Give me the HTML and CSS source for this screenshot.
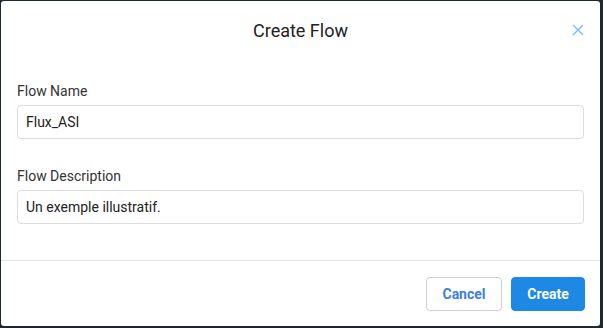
FILE: index.html
```html
<!DOCTYPE html>
<html>
<head>
<meta charset="utf-8">
<link rel="stylesheet" href="styles.css">
</head>
<body>
<div class="modal">
  <div class="modal-header">
    <h1 class="title">Create Flow</h1>
    <button class="close" aria-label="Close">
      <svg width="12" height="12" viewBox="0 0 12 12"><path d="M1 1L11 11M11 1L1 11" stroke="#74b9f5" stroke-width="1.2" fill="none"/></svg>
    </button>
  </div>
  <div class="modal-body">
    <div class="field">
      <label class="label">Flow Name</label>
      <div class="input">Flux_ASI</div>
    </div>
    <div class="field">
      <label class="label">Flow Description</label>
      <div class="input">Un exemple illustratif.</div>
    </div>
  </div>
  <div class="modal-footer">
    <button class="btn btn-cancel">Cancel</button>
    <button class="btn btn-create">Create</button>
  </div>
</div>
</body>
</html>
```
FILE: styles.css
```css
html, body { margin: 0; padding: 0; }
body {
  background: #1e2830;
  width: 603px;
  height: 328px;
  overflow: hidden;
  font-family: Roboto, "Liberation Sans", sans-serif;
}
.modal {
  background: #fff;
  margin: 1px 3px 2px 1px;
  width: 599px;
  height: 325px;
  border-radius: 3px;
  display: flex;
  flex-direction: column;
  box-sizing: border-box;
}
.modal-header {
  height: 58px;
  display: flex;
  align-items: center;
  justify-content: center;
  position: relative;
}
.title {
  margin: 0;
  font-size: 18px;
  font-weight: 400;
  color: #222;
  line-height: 22px;
  padding-top: 1px;
}
.close {
  position: absolute;
  right: 16px;
  top: 23px;
  border: 0;
  background: none;
  padding: 0;
  width: 12px;
  height: 12px;
  display: flex;
}
.modal-body {
  padding: 22px 16px 0 16px;
  flex: 1;
  display: flex;
  flex-direction: column;
  gap: 27px;
}
.field { display: flex; flex-direction: column; gap: 4px; }
.label {
  font-size: 14px;
  line-height: 20px;
  color: #333;
}
.input {
  height: 34px;
  box-sizing: border-box;
  border: 1px solid #dcdcdc;
  border-radius: 4px;
  padding: 0 8px;
  font-size: 14px;
  line-height: 32px;
  color: #222;
}
.modal-footer {
  border-top: 1px solid #e3e3e3;
  height: 66px;
  box-sizing: border-box;
  padding: 16px 15px 0 0;
  display: flex;
  justify-content: flex-end;
  align-items: flex-start;
  gap: 9px;
}
.btn {
  height: 34px;
  border-radius: 4px;
  font-family: Roboto, "Liberation Sans", sans-serif;
  font-size: 14px;
  font-weight: 700;
  padding: 0;
  box-sizing: border-box;
}
.btn-cancel {
  width: 76px;
  background: #fff;
  border: 1px solid #cfcfcf;
  color: #3c7fe0;
}
.btn-create {
  width: 74px;
  background: #1e88e5;
  border: 1px solid #1e88e5;
  color: #fff;
}
```
